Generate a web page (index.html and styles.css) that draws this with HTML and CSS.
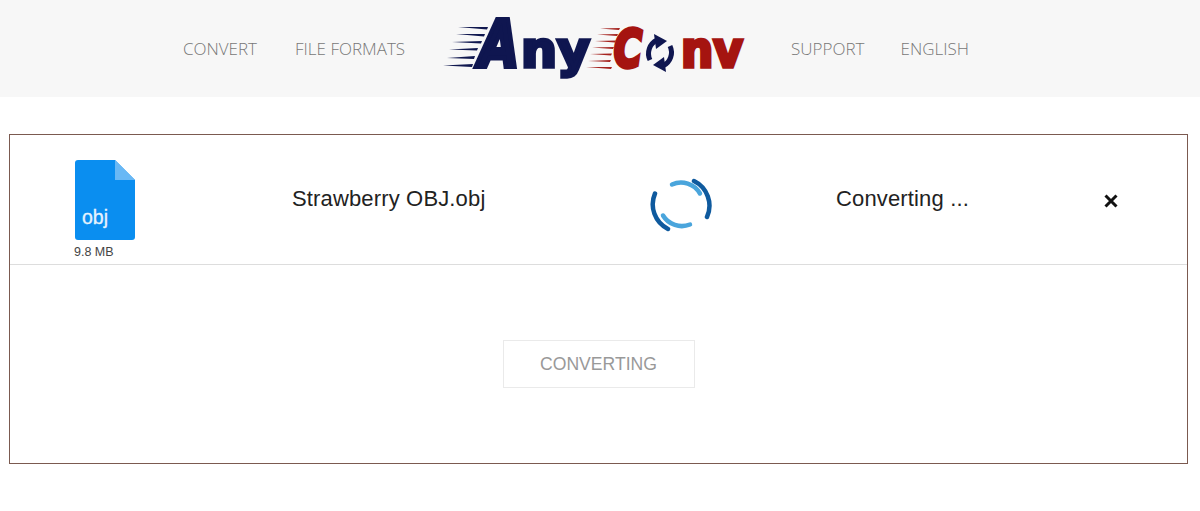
FILE: index.html
```html
<!DOCTYPE html>
<html lang="en">
<head>
<meta charset="utf-8">
<title>AnyConv</title>
<link rel="stylesheet" href="styles.css">
</head>
<body>
<header class="header">
  <nav class="nav">
    <a class="nav-link" href="#">CONVERT</a>
    <a class="nav-link" href="#">FILE FORMATS</a>
    <svg class="logo" viewBox="430 5 330 85" width="330" height="85" role="img" aria-label="AnyConv">
      <g class="speed-navy">
        <polygon points="458,26 488,26 487,28.5"/>
        <polygon points="456,33 485,33 484,35.5"/>
        <polygon points="452,41 482,40 481,42.5"/>
        <polygon points="449,48.500 478,47 477,49.500"/>
        <polygon points="447,57 475,55 474,58"/>
        <polygon points="443,64.500 473,63 472,66"/>
      </g>
      <g class="speed-red">
        <polygon points="600,27.500 620,27 619,29"/>
        <polygon points="597,33.500 618,33 617,35"/>
        <polygon points="595,40 616,39.500 615,41.500"/>
        <polygon points="592,46.500 614,46 613,48"/>
        <polygon points="590,53 612,52.500 611,54.500"/>
        <polygon points="588,60 611,59 610,61"/>
        <polygon points="586,66 612,66 611,68"/>
      </g>
      <text class="logo-text navy big" x="479" y="65.500" textLength="40" lengthAdjust="spacingAndGlyphs">A</text>
      <text class="logo-text navy small" x="521" y="65.500" textLength="69" lengthAdjust="spacingAndGlyphs">ny</text>
      <text class="logo-text red mid" x="614" y="65.500" textLength="28" lengthAdjust="spacingAndGlyphs">C</text>
      <g class="swirl">
        <path d="M650 59 A15 15 0 0 1 657 39"/>
        <path d="M670 45 A15 15 0 0 1 663 65"/>
      </g>
      <path class="swirl-head" d="M654 33 L667 40 L656 48 Z"/>
      <path class="swirl-head" d="M666 71 L653 64 L664 56 Z"/>
      <text class="logo-text red small" x="681" y="65.500" textLength="62" lengthAdjust="spacingAndGlyphs">nv</text>
    </svg>
    <a class="nav-link support" href="#">SUPPORT</a>
    <a class="nav-link" href="#">ENGLISH</a>
  </nav>
</header>
<main class="card">
  <section class="file-row">
    <div class="file">
      <svg class="file-icon" viewBox="0 0 60 80" width="60" height="80">
        <path class="sheet" d="M3 0 H40 L60 20 V77 A3 3 0 0 1 57 80 H3 A3 3 0 0 1 0 77 V3 A3 3 0 0 1 3 0 Z"/>
        <path class="fold" d="M40 0 L60 20 H40 Z"/>
        <text class="ext" x="7" y="64">obj</text>
      </svg>
      <span class="size">9.8 MB</span>
    </div>
    <div class="name">Strawberry OBJ.obj</div>
    <svg class="spinner" viewBox="0 0 62 62" width="62" height="62">
      <g class="arc-dark">
        <path d="M44 7 A27.500 27.500 0 0 1 57 43"/>
        <path d="M5 19.500 A27.500 27.500 0 0 0 18 55"/>
      </g>
      <g class="arc-light">
        <path d="M22 10.500 A22 22 0 0 1 50 19.500"/>
        <path d="M13 41.500 A22 22 0 0 0 40 50.500"/>
      </g>
    </svg>
    <div class="status">Converting ...</div>
    <svg class="close" viewBox="0 0 14 14" width="14" height="14">
      <path d="M1.500 1.500 L12.500 12.500 M12.500 1.500 L1.500 12.500"/>
    </svg>
  </section>
  <section class="action">
    <div class="button">CONVERTING</div>
  </section>
</main>
</body>
</html>
```
FILE: styles.css
```css
* { box-sizing: border-box; }

body {
  margin: 0;
  background: #fff;
  font-family: "Liberation Sans", Arial, sans-serif;
}

.header {
  height: 97px;
  background: #f7f7f7;
}

.nav {
  display: flex;
  align-items: center;
  height: 97px;
  padding-left: 183px;
}

.nav-link {
  font-family: "Open Sans", sans-serif;
  font-weight: 300;
  font-size: 17px;
  color: #777;
  text-decoration: none;
  margin-right: 38px;
  white-space: nowrap;
}

.support { margin-right: 36px; }

.logo {
  display: block;
  margin: 0 31px 0 -13px;
  flex: none;
}

.speed-navy { fill: #10184f; }
.speed-red { fill: #a5231f; }

.logo-text {
  font-family: "DejaVu Sans", sans-serif;
  font-weight: 700;
  stroke-width: 3.500px;
  stroke-linejoin: miter;
}

.navy { fill: #0f1650; stroke: #0f1650; }
.red { fill: #a51410; stroke: #a51410; }
.big { font-size: 64px; font-style: italic; stroke-width: 5px; }
.mid { font-size: 51px; font-style: italic; stroke-width: 4.500px; }
.small { font-size: 49px; }

.swirl {
  fill: none;
  stroke: #0f1650;
  stroke-width: 5px;
}

.swirl-head { fill: #0f1650; }

.card {
  margin: 37px 12px 0 9px;
  height: 330px;
  border: 1px solid #7b5a50;
}

.file-row {
  display: flex;
  align-items: flex-start;
  height: 130px;
  border-bottom: 1px solid #ddd;
  padding: 25px 0 0 65px;
}

.file {
  display: flex;
  flex-direction: column;
  width: 60px;
  flex: none;
}

.file-icon { display: block; }
.sheet { fill: #0a8ef0; }
.fold { fill: #69b8f5; }

.ext {
  font-family: "Liberation Sans", sans-serif;
  font-size: 19.500px;
  fill: #e6f3fe;
  stroke: #e6f3fe;
  stroke-width: 0.3px;
}

.size {
  margin-top: 5px;
  margin-left: -1px;
  font-size: 12.500px;
  line-height: 14px;
  color: #444;
  white-space: nowrap;
}

.name, .status {
  font-size: 22px;
  line-height: 28px;
  margin-top: 25px;
  color: #222;
  white-space: nowrap;
  letter-spacing: 0.15px;
}

.name { margin-left: 157px; width: 194px; flex: none; }

.spinner {
  flex: none;
  margin: 14px 0 0 164px;
}

.arc-dark, .arc-light {
  fill: none;
  stroke-linecap: round;
}

.arc-dark { stroke: #0f5a9e; stroke-width: 4.500px; }
.arc-light { stroke: #4aa5dc; stroke-width: 4.500px; }

.status { margin-left: 124px; width: 134px; flex: none; }

.close {
  flex: none;
  margin: 34px 0 0 134px;
}

.close path {
  fill: none;
  stroke: #111;
  stroke-width: 3px;
}

.action {
  display: flex;
  justify-content: center;
  padding-top: 75px;
}

.button {
  width: 192px;
  height: 48px;
  display: flex;
  align-items: center;
  justify-content: center;
  border: 1px solid #eaeaea;
  font-size: 17.600px;
  color: #999;
}
```
